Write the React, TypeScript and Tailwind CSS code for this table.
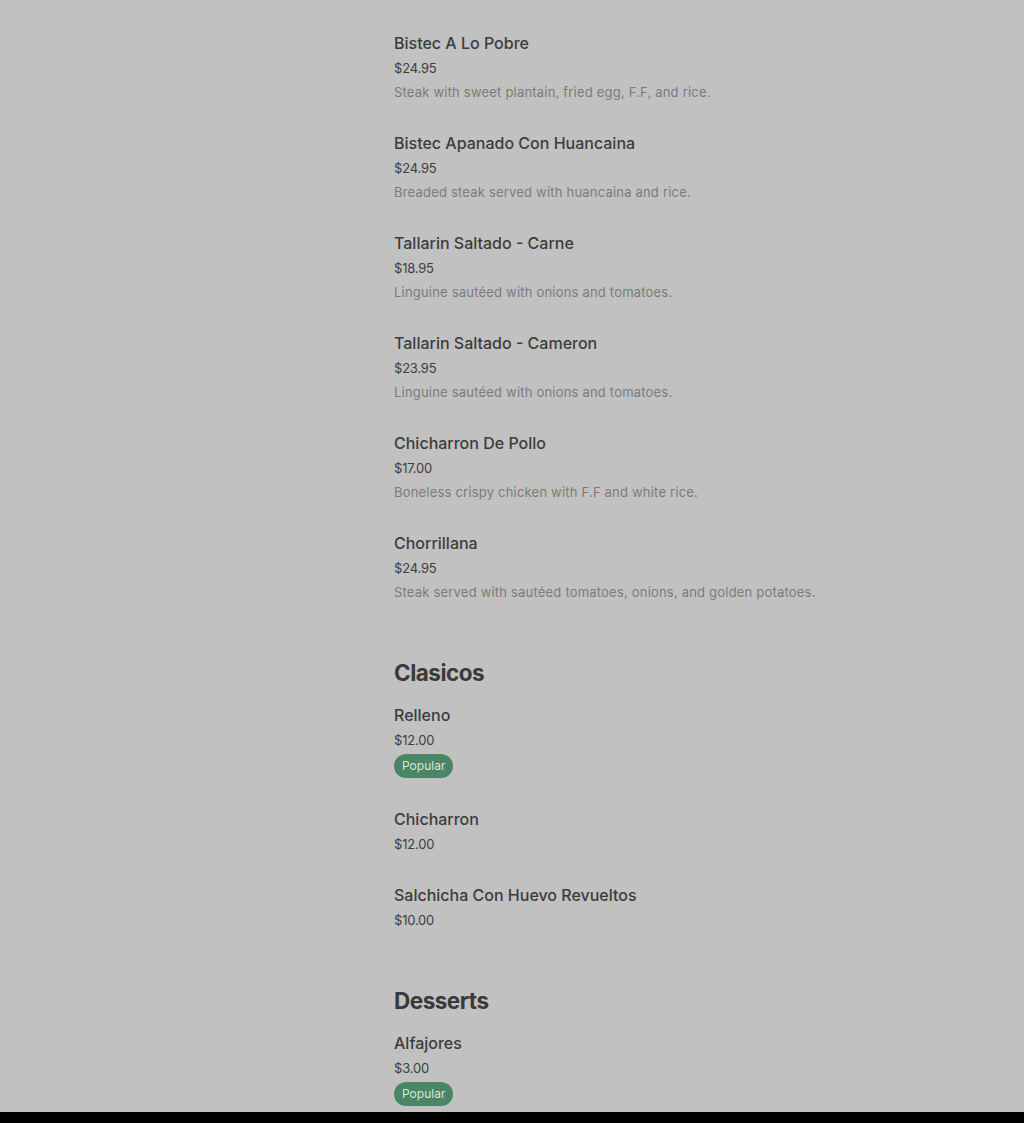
const sections: {
  title?: string;
  items: { name: string; price: string; desc?: string; popular?: boolean }[];
}[] = [
  {
    items: [
      { name: "Bistec A Lo Pobre", price: "$24.95", desc: "Steak with sweet plantain, fried egg, F.F, and rice." },
      { name: "Bistec Apanado Con Huancaina", price: "$24.95", desc: "Breaded steak served with huancaina and rice." },
      { name: "Tallarin Saltado - Carne", price: "$18.95", desc: "Linguine sautéed with onions and tomatoes." },
      { name: "Tallarin Saltado - Cameron", price: "$23.95", desc: "Linguine sautéed with onions and tomatoes." },
      { name: "Chicharron De Pollo", price: "$17.00", desc: "Boneless crispy chicken with F.F and white rice." },
      { name: "Chorrillana", price: "$24.95", desc: "Steak served with sautéed tomatoes, onions, and golden potatoes." },
    ],
  },
  {
    title: "Clasicos",
    items: [
      { name: "Relleno", price: "$12.00", popular: true },
      { name: "Chicharron", price: "$12.00" },
      { name: "Salchicha Con Huevo Revueltos", price: "$10.00" },
    ],
  },
  {
    title: "Desserts",
    items: [{ name: "Alfajores", price: "$3.00", popular: true }],
  },
];

export default function App() {
  return (
    <div
      className="h-[1123px] flex flex-col bg-[#c1c1c1] overflow-hidden"
      style={{ fontFamily: "Inter, 'Liberation Sans', sans-serif" }}
    >
      <div className="flex-1 overflow-hidden pl-[394px] pt-[31px] flex flex-col">
        {sections.map((s, i) => (
          <section key={i} className="flex flex-col">
            {s.title && (
              <h2 className="mt-[26px] mb-[14px] text-[22.5px] leading-8 font-bold tracking-[-0.5px] text-[#3a3a3a]">
                {s.title}
              </h2>
            )}
            {s.items.map((it) => (
              <div key={it.name} className="mb-[27px] flex flex-col items-start">
                <h3 className="text-base leading-[25px] font-medium text-[#3c3c3c]">{it.name}</h3>
                <p className="text-[13px] leading-6 text-[#3e3e3e] tracking-[-0.2px]">{it.price}</p>
                {it.desc && (
                  <p className="text-[13px] leading-6 text-[#7b7b7b] tracking-[0.2px]">{it.desc}</p>
                )}
                {it.popular && (
                  <span className="mt-[2px] mb-[2px] h-6 px-2 rounded-full bg-[#4a8566] text-[#d9e8de] text-[12px] leading-6">
                    Popular
                  </span>
                )}
              </div>
            ))}
          </section>
        ))}
      </div>
      <div className="h-[11px] bg-black shrink-0" />
    </div>
  );
}
